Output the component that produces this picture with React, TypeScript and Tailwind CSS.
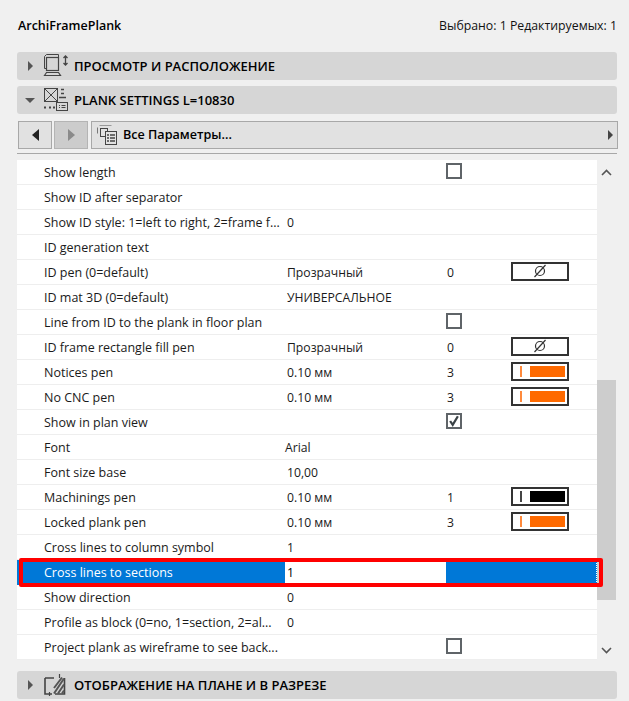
const font = { fontFamily: '"Open Sans", "Noto Sans", sans-serif' };

type Row = {
  name: string;
  value?: string;
  num?: string;
  pen?: "none" | "orange" | "black";
  check?: boolean | "on";
  shift?: boolean;
  selected?: boolean;
};

const rows: Row[] = [
  { name: "Show length", check: true },
  { name: "Show ID after separator" },
  { name: "Show ID style: 1=left to right, 2=frame f...", value: "0" },
  { name: "ID generation text" },
  { name: "ID pen (0=default)", value: "Прозрачный", num: "0", pen: "none" },
  { name: "ID mat 3D (0=default)", value: "УНИВЕРСАЛЬНОЕ" },
  { name: "Line from ID to the plank in floor plan", check: true },
  { name: "ID frame rectangle fill pen", value: "Прозрачный", num: "0", pen: "none" },
  { name: "Notices pen", value: "0.10 мм", num: "3", pen: "orange" },
  { name: "No CNC pen", value: "0.10 мм", num: "3", pen: "orange" },
  { name: "Show in plan view", check: "on" },
  { name: "Font", value: "Arial", shift: true },
  { name: "Font size base", value: "10,00" },
  { name: "Machinings pen", value: "0.10 мм", num: "1", pen: "black" },
  { name: "Locked plank pen", value: "0.10 мм", num: "3", pen: "orange" },
  { name: "Cross lines to column symbol", value: "1" },
  { name: "Cross lines to sections", value: "1", selected: true },
  { name: "Show direction", value: "0" },
  { name: "Profile as block (0=no, 1=section, 2=al...", value: "0" },
  { name: "Project plank as wireframe to see back...", check: true },
];

function Tri({ dir, color = "#555", big }: { dir: "right" | "down" | "left"; color?: string; big?: boolean }) {
  if (big) {
    const pts = dir === "left" ? "7,0 0,6 7,12" : "0,0 7,6 0,12";
    return (
      <svg width="7" height="12" className="block">
        <polygon points={pts} fill={color} />
      </svg>
    );
  }
  const pts = dir === "right" ? "1,0 6,5 1,10" : dir === "down" ? "0,1 10,1 5,6" : "6,0 1,5 6,10";
  return (
    <svg width={dir === "down" ? 10 : 7} height={dir === "down" ? 7 : 10} className="block">
      <polygon points={pts} fill={color} />
    </svg>
  );
}

function ViewIcon() {
  return (
    <svg width="26" height="26" viewBox="0 0 26 26" fill="none" stroke="#444" strokeWidth="1" className="block">
      <rect x="3.5" y="4.5" width="12" height="13" strokeWidth="1.2" />
      <path d="M1.5 3.5v12h2M3.5 1.5h12v3M1.5 3.5l2-2" />
      <path d="M1.5 22.5l2-3h12l2 3z" strokeWidth="1.2" />
      <path d="M22.5 3v9M20.5 5l2-2 2 2M20.5 10l2 2 2-2" strokeWidth="1.3" />
    </svg>
  );
}

function SettingsIcon() {
  return (
    <svg width="26" height="26" viewBox="0 0 26 26" fill="none" stroke="#444" strokeWidth="1" className="block">
      <rect x="1.5" y="1.5" width="13" height="13" />
      <path d="M2 2l12 12M14 2L2 14" />
      <path d="M18 2.5h3M18 6.5h3M16 10.5h7" strokeWidth="1.6" />
      <rect x="13.5" y="15.5" width="11" height="8" />
      <path d="M16 18.5h1M18.5 18.5h4M16 20.5h1M18.5 20.5h4" />
      <path d="M1 20.5h2M6 20.5h2M10 20.5h2" strokeWidth="2" />
    </svg>
  );
}

function PlanIcon() {
  return (
    <svg width="24" height="24" viewBox="0 0 24 24" fill="none" stroke="#444" strokeWidth="1" className="block">
      <path d="M2 5h9M2 5v16h7" strokeWidth="1.6" />
      <path d="M21.5 5v16H12" strokeWidth="1.6" />
      <path d="M11 20.5l10-15M15 20.5l6-9M19 20.5l2-3M11 15L19 4.5" stroke="#555" strokeWidth="2" />
      <path d="M16.5 1v4M6.5 19v4" strokeWidth="1.2" />
    </svg>
  );
}

function ListIcon() {
  return (
    <svg width="22" height="22" viewBox="0 0 22 22" fill="none" stroke="#444" strokeWidth="1" className="block">
      <path d="M3.5 1.5h12" stroke="#999" />
      <path d="M1.5 3.5v6" stroke="#777" />
      <rect x="4.5" y="4.5" width="7" height="8" />
      <rect x="9.5" y="7.5" width="11" height="13" fill="#e1e1e1" />
      <path d="M11 11h2M14 11h5M11 14h2M14 14h5M11 17h2M14 17h5" strokeWidth="1.4" />
    </svg>
  );
}

function Section({ title, icon, open }: { title: string; icon: React.ReactNode; open?: boolean }) {
  return (
    <div className="flex h-[28px] items-center rounded-[3px] bg-[#d6d6d6]">
      <div className="flex w-[26px] justify-center">
        <Tri dir={open ? "down" : "right"} />
      </div>
      <div className="flex w-[31px]">{icon}</div>
      <span className="pt-[2px] text-[13px] font-semibold text-black">{title}</span>
    </div>
  );
}

function Check({ on }: { on?: boolean }) {
  return (
    <span className="flex h-[16px] w-[16px] items-center justify-center border-2 border-[#5f6468] bg-white">
      {on && (
        <svg width="14" height="14" viewBox="0 0 14 14" fill="none" className="block">
          <path d="M2.5 7l3 4.5L11.5 1.5" stroke="#3a4246" strokeWidth="2.6" />
        </svg>
      )}
    </span>
  );
}

function Pen({ kind }: { kind: "none" | "orange" | "black" }) {
  const color = kind === "black" ? "bg-black" : "bg-[#ff6a00]";
  return (
    <span className="flex h-[19px] w-[58px] items-center border-2 border-[#333] bg-white">
      {kind === "none" ? (
        <span className="flex w-full justify-center">
          <svg width="14" height="14" viewBox="0 0 14 14" fill="none" stroke="#333" strokeWidth="1.2" className="block">
            <circle cx="7" cy="7" r="4.5" />
            <path d="M1.5 13L12.5 1" />
          </svg>
        </span>
      ) : (
        <>
          <span className={`ml-[7px] h-[11px] w-[2px] ${kind === "black" ? "bg-[#444]" : "bg-[#ff8a3c]"}`} />
          <span className={`ml-[8px] h-[11px] w-[35px] ${color}`} />
        </>
      )}
    </span>
  );
}

function TableRow({ r }: { r: Row }) {
  return (
    <div
      className={`flex h-[25px] items-center border-b ${
        r.selected ? "border-[#0078d7] bg-[#0078d7] text-white" : "border-[#eeeeee] text-[#1a1a1a]"
      }`}
    >
      <span className="w-[268px] whitespace-nowrap pl-[27px] pt-[2px] text-[12.5px]">{r.name}</span>
      {r.selected ? (
        <span className="flex h-[22px] w-[161px] items-center bg-white pl-[2px] pt-[2px] text-[12.2px] text-black">
          {r.value}
        </span>
      ) : (
        <span className={`w-[161px] whitespace-nowrap pt-[2px] text-[12.2px] ${r.shift ? "pl-0" : "pl-[2px]"}`}>
          {r.value}
        </span>
      )}
      {r.check !== undefined && !r.selected && (
        <span className="-mt-[2px]">
          <Check on={r.check === "on"} />
        </span>
      )}
      {r.num && <span className="w-[65px] pl-px pt-[2px] text-[12.2px]">{r.num}</span>}
      {r.pen && (
        <span className="-mt-[2px]">
          <Pen kind={r.pen} />
        </span>
      )}
      {r.selected && <span className="ml-auto h-[24px] border-r border-dotted border-white" />}
    </div>
  );
}

export default function App() {
  return (
    <div className="flex h-[701px] w-[629px] flex-col overflow-hidden bg-[#f0f0f0] pl-[17px] pr-[12px]" style={font}>
      <div className="flex h-[52px] items-center justify-between pl-px text-[#111]">
        <span className="text-[12.5px] font-semibold text-black">ArchiFramePlank</span>
        <span className="text-[12.3px]">Выбрано: 1 Редактируемых: 1</span>
      </div>

      <Section title="ПРОСМОТР И РАСПОЛОЖЕНИЕ" icon={<ViewIcon />} />
      <div className="mt-[6px]">
        <Section title="PLANK SETTINGS L=10830" icon={<SettingsIcon />} open />
      </div>

      <div className="mt-[7px] flex h-[28px] gap-[2px] pl-px">
        <div className="flex w-[34px] items-center justify-center border border-[#a8a8a8] bg-[#e1e1e1]">
          <Tri dir="left" color="#222" big />
        </div>
        <div className="flex w-[34px] items-center justify-center border border-[#b4b4b4] bg-[#cccccc]">
          <Tri dir="right" color="#8a8a8a" big />
        </div>
        <div className="ml-[1px] mr-[-1px] flex flex-1 items-center justify-between border border-[#a8a8a8] bg-[#e1e1e1] pl-[4px] pr-[3px]">
          <div className="flex items-center gap-[5px]">
            <ListIcon />
            <span className="pt-[1px] text-[12.6px] font-semibold text-black">Все Параметры...</span>
          </div>
          <Tri dir="right" color="#444" />
        </div>
      </div>

      <div className="mt-[4px] h-px bg-[#a8a8a8]" />

      <div className="mt-[6px] flex h-[499px]">
        <div className="relative w-[580px] bg-white">
          {rows.map((r) => (
            <TableRow key={r.name} r={r} />
          ))}
          <div className="absolute left-[2px] top-[398px] h-[29px] w-[584px] rounded-[2px] border-[4px] border-[#ff0000]" />
        </div>
        <div className="flex w-[19px] flex-col bg-[#f0f0f0]">
          <div className="flex h-[24px] items-center justify-center">
            <svg width="11" height="7" viewBox="0 0 11 7" fill="none" stroke="#555" strokeWidth="1.6" className="block">
              <path d="M1 6l4.5-4.5L10 6" />
            </svg>
          </div>
          <div className="mt-[196px] h-[220px] bg-[#cdcdcd]" />
          <div className="flex flex-1 items-end justify-center pb-[5px]">
            <svg width="11" height="7" viewBox="0 0 11 7" fill="none" stroke="#555" strokeWidth="1.6" className="block">
              <path d="M1 1l4.5 4.5L10 1" />
            </svg>
          </div>
        </div>
      </div>

      <div className="mt-[12px]">
        <Section title="ОТОБРАЖЕНИЕ НА ПЛАНЕ И В РАЗРЕЗЕ" icon={<PlanIcon />} />
      </div>
    </div>
  );
}
